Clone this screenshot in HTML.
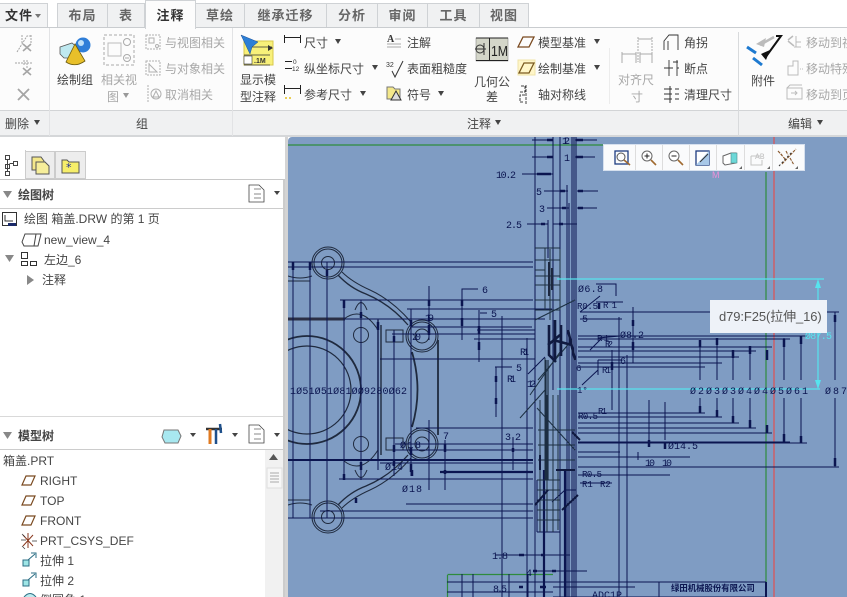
<!DOCTYPE html>
<html><head><meta charset="utf-8"><style>
html,body{margin:0;padding:0;background:#fff}
#p{position:relative;width:847px;height:597px;overflow:hidden;background:#fff;font-family:"Liberation Sans","Noto Sans CJK SC",sans-serif;color:#444}
.a{position:absolute}
.t{position:absolute;white-space:nowrap;font-size:12px;line-height:14px;color:#444}
.d{color:#a8a8a8}
.b{font-weight:bold}
.tab{position:absolute;top:3px;height:24px;box-sizing:border-box;background:#f0f1f2;border:1px solid #cfd2d5;border-left:0;border-bottom:0;font-size:13px;line-height:23px;text-align:center;color:#666;font-weight:bold;letter-spacing:1px}
.tri{position:absolute;width:0;height:0;border-left:3.5px solid transparent;border-right:3.5px solid transparent;border-top:5px solid #444}
svg{position:absolute;overflow:visible}
</style></head><body><div id="p">

<!-- ribbon -->
<div class="a" style="left:0;top:0;width:847px;height:27px;background:#fff"></div>
<div class="a" style="left:0;top:27px;width:847px;height:84px;background:#fcfcfc;border-top:1px solid #c9cccf;box-sizing:border-box"></div>
<div class="a" style="left:0;top:110px;width:847px;height:26px;background:#f0f1f2;border-top:1px solid #d2d4d6;box-sizing:border-box"></div>
<div class="a" style="left:0;top:135px;width:847px;height:2px;background:#d5d7d9"></div>
<div class="a" style="left:49px;top:28px;width:1px;height:108px;background:#e2e3e5"></div>
<div class="a" style="left:232px;top:28px;width:1px;height:108px;background:#e2e3e5"></div>
<div class="a" style="left:738px;top:32px;width:1px;height:104px;background:#d8dadc"></div>
<div class="a" style="left:609px;top:48px;width:1px;height:56px;background:#ececec"></div>

<div class="tab" style="left:0;width:48px;background:#f3f4f5;border-left:0;color:#333;text-align:left;padding-left:5px">文件</div>
<div class="tri" style="left:35px;top:14px;border-top-color:#777;border-top-width:4px"></div>
<div class="tab" style="left:57px;width:51px;border-left:1px solid #cfd2d5">布局</div>
<div class="tab" style="left:108px;width:37px">表</div>
<div class="tab" style="left:145px;top:0;height:29px;width:51px;background:#fcfcfc;color:#333;line-height:30px;border-left:1px solid #cfd2d5">注释</div>
<div class="tab" style="left:196px;width:49px">草绘</div>
<div class="tab" style="left:245px;width:82px">继承迁移</div>
<div class="tab" style="left:327px;width:51px">分析</div>
<div class="tab" style="left:378px;width:50px">审阅</div>
<div class="tab" style="left:428px;width:52px">工具</div>
<div class="tab" style="left:480px;width:49px">视图</div>

<!-- ribbon texts -->
<div class="t" style="left:57px;top:73px">绘制组</div>
<div class="t d" style="left:101px;top:73px">相关视</div>
<div class="t d" style="left:107px;top:90px">图</div><div class="tri" style="left:123px;top:93px;border-top-color:#999"></div>
<div class="t d" style="left:165px;top:36px">与视图相关</div>
<div class="t d" style="left:165px;top:62px">与对象相关</div>
<div class="t d" style="left:165px;top:88px">取消相关</div>
<div class="t" style="left:240px;top:73px">显示模</div>
<div class="t" style="left:240px;top:90px">型注释</div>
<div class="t" style="left:5px;top:117px">删除</div><div class="tri" style="left:34px;top:120px"></div>
<div class="t" style="left:136px;top:117px">组</div>
<div class="t" style="left:467px;top:117px">注释</div><div class="tri" style="left:495px;top:120px"></div>
<div class="t" style="left:788px;top:117px">编辑</div><div class="tri" style="left:817px;top:120px"></div>

<div class="t" style="left:304px;top:36px">尺寸</div><div class="tri" style="left:335px;top:39px"></div>
<div class="t" style="left:304px;top:62px">纵坐标尺寸</div><div class="tri" style="left:372px;top:65px"></div>
<div class="t" style="left:304px;top:88px">参考尺寸</div><div class="tri" style="left:360px;top:91px"></div>
<div class="t" style="left:407px;top:36px">注解</div>
<div class="t" style="left:407px;top:62px">表面粗糙度</div>
<div class="t" style="left:407px;top:88px">符号</div><div class="tri" style="left:438px;top:91px"></div>
<div class="t" style="left:474px;top:75px">几何公</div>
<div class="t" style="left:486px;top:90px">差</div>
<div class="t" style="left:538px;top:36px">模型基准</div><div class="tri" style="left:594px;top:39px"></div>
<div class="t" style="left:538px;top:62px">绘制基准</div><div class="tri" style="left:594px;top:65px"></div>
<div class="t" style="left:538px;top:88px">轴对称线</div>
<div class="t d" style="left:618px;top:73px">对齐尺</div>
<div class="t d" style="left:631px;top:90px">寸</div>
<div class="t" style="left:684px;top:36px">角拐</div>
<div class="t" style="left:684px;top:62px">断点</div>
<div class="t" style="left:684px;top:88px">清理尺寸</div>
<div class="t" style="left:751px;top:74px">附件</div>
<div class="t d" style="left:806px;top:36px">移动到视图</div>
<div class="t d" style="left:806px;top:62px">移动特殊</div>
<div class="t d" style="left:806px;top:88px">移动到页面</div>

<!-- ribbon icons -->
<svg width="847" height="137" viewBox="0 0 847 137" style="left:0;top:0" fill="none">
<g stroke="#a5a5a5" stroke-width="1">
<path d="M22 35V44M31 35V44M17 52L27 36H31" stroke-dasharray="2 1"/><path d="M23 44L31 51M31 44L23 51" stroke-width="1.6"/>
<path d="M15 63H33M24 60V66M27 60V68" stroke-dasharray="2 1"/><path d="M23 68L31 75M31 68L23 75" stroke-width="1.6"/>
<path d="M18 89L29 100M29 89L18 100" stroke-width="1.8"/>
</g>
<!-- 绘制组 -->
<path d="M60 47L72 43L78 48V58L64 58L60 54Z" fill="#bfe9f0" stroke="#555" stroke-width=".8"/>
<circle cx="83" cy="45" r="7.5" fill="#2f7ed8"/><circle cx="81" cy="43" r="3" fill="#bfe0f8"/>
<path d="M75 44L66 62Q75 68 85 61Z" fill="#e8c02a" stroke="#6a5a10" stroke-width=".8"/>
<!-- 相关视图 -->
<rect x="104" y="35" width="30" height="30" stroke="#aaa" stroke-dasharray="3 2"/>
<rect x="108" y="43" width="13" height="13" stroke="#bbb"/>
<circle cx="127" cy="42" r="3.5" stroke="#aaa"/><circle cx="127" cy="58" r="3.5" stroke="#aaa"/><path d="M125 58H129" stroke="#aaa"/>
<!-- small gray -->
<g stroke="#b0b0b0">
<rect x="146" y="35" width="14" height="14" stroke-dasharray="2 1"/><rect x="149" y="38" width="5" height="5"/><circle cx="157" cy="46" r="1.5"/>
<rect x="146" y="61" width="14" height="14" stroke-dasharray="2 1"/><path d="M149 63V72H157L149 64"/>
<path d="M148 85V102" stroke-dasharray="2 1"/><circle cx="156" cy="94" r="5"/><path d="M153 97L156 91L159 97Z"/>
</g>
<!-- 显示模型注释 -->
<rect x="244" y="41" width="29" height="24" fill="#f8f07a" stroke="#d7c94a"/>
<path d="M241 35L258 42L252 47L250 54Z" fill="#2c7fd6" stroke="#1b4f96" stroke-width=".5"/>
<path d="M252 47H272M244 55H270M244 65H270" stroke="#333" stroke-width=".8"/>
<path d="M268 45L273 48L268 51Z" fill="#333"/>
<rect x="244" y="56" width="8" height="8" fill="#fff" stroke="#333" stroke-width=".6"/>
<text x="254" y="63" font-family="Liberation Sans" font-size="7" font-weight="bold" fill="#333">.1M</text>
<!-- dim icons -->
<g stroke="#222" stroke-width="1">
<path d="M284.500 35V43M300.500 35V43M285 37.500H300"/>
<path d="M285 61.500H292M285 68.500H292"/>
<path d="M284.500 85V94M300.500 85V94M285 88.500H300"/>
</g>
<text x="293" y="64" font-family="Liberation Sans" font-size="6.5" fill="#333">0</text>
<text x="292" y="71" font-family="Liberation Sans" font-size="6.5" fill="#333">12</text>
<path d="M285 98H287M289 98H291" stroke="#e4c020" stroke-width="1.6"/>
<!-- 注解 etc -->
<text x="387" y="42" font-family="Liberation Serif" font-size="10" font-weight="bold" fill="#333">A</text>
<path d="M395 39H401M387 44H401M387 47H401" stroke="#aaa"/>
<text x="386" y="67" font-family="Liberation Sans" font-size="7" fill="#333">32</text>
<path d="M392 71L395 77L403 61" stroke="#333" stroke-width="1"/>
<path d="M387 87H393L395 89H400V99H387Z" fill="#f4e88a" stroke="#777"/><path d="M391 100L396 91L401 100Z" fill="#ddd" stroke="#333"/>
<!-- 几何公差 -->
<rect x="476" y="38" width="32" height="23" fill="#d4d6c9" stroke="#777" stroke-width=".5"/>
<path d="M476 38H508M476 60.500H508M489.500 38V61" stroke="#222"/>
<circle cx="480" cy="49" r="4" stroke="#333"/><path d="M475 49H486M484 43V55" stroke="#333"/>
<text x="491" y="56" font-family="Liberation Sans" font-size="15" fill="#222" textLength="17" lengthAdjust="spacingAndGlyphs">1M</text>
<!-- datum -->
<path d="M523 37H534L529 47H518Z" stroke="#7a4a20" stroke-width="1.3"/>
<rect x="518" y="60" width="17" height="15" fill="#fff6c8" stroke="#efe3a8"/>
<path d="M524 63H534L529 73H519Z" stroke="#7a5a20" stroke-width="1.3"/>
<path d="M521 86H525V92H520M525 95H520V102H524M526 85V104" stroke="#444" stroke-dasharray="3 1"/>
<!-- 对齐尺寸 -->
<g stroke="#aaa">
<path d="M638 37V62" stroke-dasharray="2 1"/><path d="M652 37V62" stroke-dasharray="2 1"/><path d="M638 39H652"/>
<path d="M622 52V63M636 52V63M640 52V63M652 52V63M622 54H636M640 54H652"/>
</g>
<g stroke="#333">
<path d="M664 50V41L669 35H678V50M668 50V41" stroke-width=".9"/>
<path d="M664 68H673M669 60V76M677 60V76M677 68H679M673 62H678" stroke-width=".9"/>
<path d="M664 89H672M664 94H672M664 99H672M670 86L670 103M675 89H679M675 94H679M675 99H679" stroke-width="1"/>
</g>
<!-- 附件 -->
<path d="M776 36H781L765 58" stroke="#111" stroke-width="2"/><path d="M761 54L770 50L766 60Z" fill="#111"/>
<path d="M774 37L760 45" stroke="#bbb" stroke-width="2.5"/><path d="M756 44L766 38L764 47Z" fill="#bbb"/>
<path d="M747 47L756 53M753 58L762 65" stroke="#1e7ad0" stroke-width="3"/>
<g stroke="#bbb">
<path d="M788 40L793 36M788 41L794 46" stroke-width="1.5"/><path d="M796 36V47M796 42H801M794 47H801"/>
<path d="M788 75V66H793V61H798V75Z"/><path d="M800 69H803" stroke-dasharray="1 1"/>
<rect x="787" y="88" width="15" height="11"/><path d="M787 88L790 85H802M791 93H797M795 91L797 93L795 95"/>
</g>
</svg>

<!-- left panel -->
<div class="a" style="left:0;top:137px;width:285px;height:460px;background:#fff"></div>
<div class="a" style="left:285px;top:137px;width:3px;height:460px;background:#d4d4d4"></div>
<div class="a" style="left:25px;top:151px;width:30px;height:28px;background:#ededed;border:1px solid #ccc;box-sizing:border-box"></div>
<div class="a" style="left:55px;top:151px;width:31px;height:28px;background:#ededed;border:1px solid #ccc;box-sizing:border-box"></div>
<div class="a" style="left:0;top:179px;width:285px;height:1px;background:#c8c8c8"></div>
<div class="a" style="left:25px;top:150px;width:0;height:30px;border-left:1px solid #ccc"></div>
<div class="a" style="left:0;top:208px;width:285px;height:1px;background:#ccc"></div>
<div class="a" style="left:0;top:416px;width:285px;height:1px;background:#d9d9d9"></div>
<div class="a" style="left:0;top:449px;width:285px;height:1px;background:#ccc"></div>
<div class="a" style="left:283px;top:180px;width:2px;height:417px;background:#ccc"></div>

<svg width="285" height="460" viewBox="0 137 285 460" style="left:0;top:137px" fill="none">
<!-- tab icons -->
<g stroke="#444"><rect x="5.500" y="155.500" width="4" height="4"/><rect x="5.500" y="164.500" width="4" height="4"/><rect x="13.500" y="161.500" width="4" height="4"/><rect x="5.500" y="171.500" width="4" height="4"/><path d="M7.500 160V172M9.500 163.500H13.500"/></g>
<path d="M32 157H41L44 161V170H32Z" fill="#f4e88a" stroke="#555"/><path d="M36 162H45L49 166V174H36Z" fill="#f6ee9a" stroke="#555"/>
<path d="M62 160H67L69 162H79V173H62Z" fill="#f6ee6a" stroke="#555"/>
<text x="66" y="171" font-size="11" font-family="DejaVu Sans" fill="#1a2a9a">*</text>
<!-- header tris -->
<path d="M3 191L12 191L7.500 198Z" fill="#888"/>
<path d="M3 432L12 432L7.500 439Z" fill="#888"/>
<g stroke="#444" fill="#fff"><path d="M249 185H259L264 190V202H249Z" stroke-width=".8"/><path d="M254 189H261M254 194H261M254 198H261" stroke="#888"/></g>
<path d="M274 191H280L277 195Z" fill="#444"/>
<path d="M249 425H259L264 430V443H249Z" fill="#fff" stroke="#444" stroke-width=".8"/><path d="M254 429H261M254 434H261M254 439H261" stroke="#888"/>
<path d="M274 433H280L277 437Z" fill="#444"/>
<path d="M190 433H196L193 437Z" fill="#444"/><path d="M232 433H238L235 437Z" fill="#444"/>
<path d="M164 430H178L181 436L178 443H165L162 437Z" fill="#a8e8f0" stroke="#777"/>
<path d="M206 429H222" stroke="#333" stroke-width="2.500"/><path d="M210 429V444" stroke="#e07a20" stroke-width="3"/><path d="M216 429V444M220 424L221 433" stroke="#1e4f8a" stroke-width="2.500"/>
<!-- tree icons -->
<rect x="2.500" y="212.500" width="14" height="13" stroke="#333"/><path d="M5 215V221H13" stroke="#333"/><rect x="8" y="223" width="8" height="3" fill="#1a2a6a"/>
<path d="M22 242L25 234H41L38 246H24Z M36 234L34 246" stroke="#444" fill="#fff"/>
<path d="M5 255H14L9.500 262Z" fill="#888"/>
<rect x="21.500" y="252.500" width="6" height="6" stroke="#333"/><rect x="21.500" y="261.500" width="6" height="4" stroke="#333"/><rect x="30.500" y="261.500" width="6" height="4" stroke="#333"/>
<path d="M27 275L34 280L27 285Z" fill="#888"/>
<g stroke="#7a4a20" stroke-width="1.200">
<path d="M26 476H35L31 485H22Z"/><path d="M26 496H35L31 505H22Z"/><path d="M26 516H35L31 525H22Z"/>
</g>
<path d="M23 535L33 546M33 535L23 546M28 533V548" stroke="#8a3a20"/><path d="M21 540H26M32 541H37M22 534L25 537M22 546L25 549" stroke="#333" stroke-width=".7"/>
<rect x="23" y="560" width="6" height="6" fill="#9fe6e6" stroke="#2c6f85"/><path d="M28 560L35 554M31 553H36V558" stroke="#2c6f85"/>
<rect x="23" y="580" width="6" height="6" fill="#9fe6e6" stroke="#2c6f85"/><path d="M28 580L35 574M31 573H36V578" stroke="#2c6f85"/>
<path d="M24 597Q30 590 36 597" fill="#bdebef" stroke="#2c6f85"/>
<!-- scrollbar -->
<rect x="265" y="450" width="18" height="147" fill="#f1f1f1"/>
<path d="M269 460H278L273.500 454Z" fill="#555"/>
<rect x="267" y="468" width="15" height="20" fill="#f7f7f7" stroke="#ddd"/>
<path d="M270 473H279M270 476H279M270 479H279M270 482H279" stroke="#aaa"/>
</svg>

<div class="t b" style="left:18px;top:188px;font-size:12px;color:#444">绘图树</div>
<div class="t" style="left:24px;top:212px">绘图 箱盖.DRW 的第 1 页</div>
<div class="t" style="left:44px;top:233px">new_view_4</div>
<div class="t" style="left:44px;top:253px">左边_6</div>
<div class="t" style="left:42px;top:273px">注释</div>
<div class="t b" style="left:18px;top:429px;color:#444">模型树</div>
<div class="t" style="left:3px;top:454px">箱盖.PRT</div>
<div class="t" style="left:40px;top:474px">RIGHT</div>
<div class="t" style="left:40px;top:494px">TOP</div>
<div class="t" style="left:40px;top:514px">FRONT</div>
<div class="t" style="left:40px;top:534px">PRT_CSYS_DEF</div>
<div class="t" style="left:40px;top:554px">拉伸 1</div>
<div class="t" style="left:40px;top:574px">拉伸 2</div>
<div class="t" style="left:40px;top:593px">倒圆角 1</div>

<!-- canvas -->
<div class="a" style="left:288px;top:137px;width:559px;height:460px;background:#7f9cc3;overflow:hidden;border-top-left-radius:4px">
<svg width="847" height="597" viewBox="0 0 847 597" style="left:-288px;top:-137px" fill="none">
<path d="M288 145H766" stroke="#2f8b3c" stroke-width="1.200"/>
<path d="M766 172V582" stroke="#2f8b3c" stroke-width="1.200"/>
<path d="M774 137V597" stroke="#d25a60" stroke-width="1.400"/>
<path d="M447.500 575V597M447.500 574.500H553" stroke="#2f8b3c" stroke-width="1.200"/>

<!-- geometry left view -->
<g stroke="#1f2a3e" stroke-width="1">
<circle cx="328" cy="263" r="16"/><circle cx="328" cy="263" r="14"/><circle cx="328" cy="263" r="6.500"/>
<circle cx="422" cy="336" r="16"/><circle cx="422" cy="336" r="14"/><circle cx="422" cy="336" r="7"/>
<circle cx="422" cy="444" r="16"/><circle cx="422" cy="444" r="14"/><circle cx="422" cy="444" r="7"/>
<circle cx="328" cy="517" r="16"/><circle cx="328" cy="517" r="14"/><circle cx="328" cy="517" r="6.500"/>
<circle cx="307" cy="390" r="54" stroke-width="1.800"/><circle cx="307" cy="390" r="44" stroke-width="1.200"/>
<circle cx="361" cy="335" r="7.500"/><circle cx="361" cy="444" r="7.500"/>
<path d="M338 275Q350 288 366 294Q390 304 408 325" stroke-width="1.300"/>
<path d="M342 272Q352 282 370 290Q392 300 411 322"/>
<path d="M338 505Q350 492 366 486Q390 476 408 455" stroke-width="1.300"/>
<path d="M342 508Q352 498 370 490Q392 480 411 458"/>
<path d="M344 319Q362 305 378 330V450Q362 475 344 461" stroke-width="1"/>
<path d="M378 320V460M381 325V455" stroke-width="1.400"/>
<path d="M355 310Q361 295 367 310M355 470Q361 485 367 470"/>
<path d="M386 330H403V342H386ZM386 438H403V450H386Z"/>
<path d="M412 352Q423 390 412 427" stroke-width="1.800"/>
<path d="M438 340V435" stroke-width="1.800"/>
<path d="M288 276Q300 280 312 276M288 281H310M288 500H310M288 505Q300 501 312 505"/>
</g>
<path d="M288 319H345" stroke="#2b2f45" stroke-width="3"/>

<!-- dim lines left -->
<g stroke="#0b1550" stroke-width="1">
<path d="M288 262H533M288 267H533M340 300H533M407 309H552M345 319H545M410 327H532M477 330H535M392 334H535M474 339H535M380 359H535M416 428H533M395 444H533M395 450H533M380 463H533M339 479H533M406 504H533M320 511H533M288 518H533"/>
<path d="M293 262V518M310 262V518M327 262V518M344 300V480M361 300V480M378 319V470M394 330V476M411 309V476M429 286V340M429 420V490M445 440V490M462 289V340M479 310V362M496 367V417M502 316V597M513 437V470M527 338V597M535 137V597M553 137V390M560 137V597M567 185V597M569 203V597M572 137V597M574 137V597M576 137V597M548 220V258"/>
<path d="M462 300V289H478M480 313H487M495 367H512"/>
<path d="M532 140H553M575 140H597M532 157H553M575 157H595M522 174H553M544 191H568M577 191H598M547 208H569M577 208H597M527 224H548M553 224H577"/>
<path d="M545 357L528 374"/>
</g>
<path d="M288 460H533" stroke="#0b1550" stroke-width="2"/>
<path d="M440 472H533" stroke="#0b1550" stroke-width="2.200"/>
<path d="M544 470V597M565 470V597" stroke="#0b1550" stroke-width="2.200"/>

<!-- arrows -->
<g stroke="#0b1550" stroke-width="2.500">
<path d="M293 262V270M310 262V270M327 270V276M344 300V308M361 312V318M378 322V330M394 336V342M411 320V326M429 300V306M429 325V335M462 318V326M479 326V334M479 342V350M496 376V382M496 398V404M513 448V452M445 444V452M462 300V306M445 470V474M394 445V452M411 448V455M394 460V466M411 464V472M361 462V470M344 474V480M356 498V503M412 470V476"/>
<path d="M547 140H553M576 140H583M547 157H553M576 157H583M537 174H551M560 191H565M578 191H583M562 208H566M578 208H583M541 224H545M559 224H563"/>
<path d="M700 340V347M717 338V345M733 350V358M750 346V354M767 350V360M784 339V347M801 336V344M835 315V322M700 406V413M717 410V417M733 416V423M750 420V428M767 425V433M784 434V442M801 436V443M835 458V466M633 320V326M633 342V350M649 440V447M665 442V449M599 303V309M612 362V370"/>
<path d="M519 555H524M541 555H545M533 571H537M552 571H556M519 587H523M540 587H546"/>
</g>

<!-- right dim -->
<g stroke="#0b1550" stroke-width="1">
<path d="M580 312H839M580 319H622M578 336H807M578 339H790M578 347H772M578 351H756M578 357H739M578 363H722M578 367H705"/>
<path d="M578 413H705M578 417H722M578 423H739M578 428H756M578 433H772M578 442H790M578 443H807M578 452H620M578 467H839M578 457H690M578 475H670M580 483H612"/>
<path d="M700 340V380M717 338V380M733 350V380M750 346V380M784 338V380M801 336V380M835 312V380M700 398V413M717 398V417M733 398V423M750 398V428M784 398V442M801 398V443M835 398V467"/>
<path d="M619 317V597M627 355V597M633 307V363M649 400V440M665 402V440M612 350V410M638 452V460"/>
<path d="M596 284H616V296M596 302H623M580 312L600 296M598 338L620 336M590 350L602 338M598 360H622M598 360V375M598 370L582 385"/>
<path d="M535 571H587M535 555H570M495 555H535M635 587H553M553 597H766"/>
<path d="M553 582H766M659 582V597M462 574V597M473 574V597M509 574V597M528 574V597M447 582H553M447 592H553"/>
<path d="M537 532H560M537 480V532"/>
<path d="M565 490L552 502M565 490H576"/>
</g>
<path d="M766 582V597" stroke="#0b1550" stroke-width="2"/>

<!-- dense core -->
<g stroke="#1c2f42" stroke-width="1">
<path d="M535 248H560M535 260H560M535 276H560M535 285H560M535 300H560M535 310H560M545 248V310M550 249V320M560 249V310M535 270H545"/>
<path d="M537 480H560M537 490H560M537 500H560M537 510H560M537 520H560M540 400V532M547 395V532M553 395V532M558 395V530M537 408L575 450M538 430H575M538 445H575M538 460H575"/>
<path d="M535 320L575 300M538 380L572 340M530 395L560 352M520 418L545 390M545 358V480"/>
</g>
<path d="M549 262V296M552 268V290" stroke="#1d2840" stroke-width="2"/>
<path d="M549 325V355L556 362M555 320V360M561 325V356M553 340L572 345M548 345L560 335M568 330L575 360" stroke="#101a40" stroke-width="2.600"/>
<path d="M546 360V480M548 360V480" stroke="#1c2f42" stroke-width="1.200"/>
<path d="M540 455V470M572 432L580 440M556 470H575" stroke="#101a40" stroke-width="2"/>
<path d="M535 505L548 490M562 510L578 495" stroke="#0e1840" stroke-width="2"/>

<!-- cyan -->
<path d="M557 279H824M557 389H820M818 281V388" stroke="#56e4ee" stroke-width="1.200"/>
<path d="M818 279L815 288H821ZM818 389L815 380H821Z" fill="#56e4ee"/>

<!-- labels -->
<g font-family="Liberation Mono,monospace" font-size="10" fill="#0b1550">
<text x="496" y="178" textLength="20">10.2</text><text x="506" y="228" textLength="16">2.5</text>
<text x="536" y="195">5</text><text x="539" y="212">3</text>
<text x="562" y="144" textLength="8">12</text><text x="564" y="161">1</text>
<text x="482" y="293">6</text><text x="491" y="317">5</text><text x="516" y="371">5</text>
<text x="507" y="382" textLength="9">R1</text>
<text x="520" y="355" textLength="9">R1</text>
<text x="527" y="387" textLength="9">12</text>
<text x="425" y="321" textLength="9">19</text><text x="412" y="340" textLength="9">20</text>
<text x="290" y="394" textLength="117">1Ø51Ø51Ø81ØØ9280Ø62</text>
<text x="443" y="439">7</text><text x="505" y="440" textLength="16">3.2</text>
<text x="400" y="448" textLength="21">Ø18</text>
<text x="385" y="470" textLength="18">Ø14</text>
<text x="402" y="492" textLength="20">Ø18</text>
<text x="492" y="559" textLength="16">1.8</text><text x="526" y="576">4</text><text x="493" y="592" textLength="14">8.5</text>
<text x="578" y="292" textLength="25">Ø6.8</text>
<text x="577" y="309" textLength="21" font-size="9">R0.5</text>
<text x="603" y="308" textLength="14" font-size="9">R1</text>
<text x="582" y="322">5</text>
<text x="597" y="341" textLength="12" font-size="9">R1</text>
<text x="605" y="347" textLength="8" font-size="9">R2</text>
<text x="620" y="338" textLength="24">Ø8.2</text>
<text x="620" y="364">6</text>
<text x="602" y="373" textLength="9" font-size="9">R1</text>
<text x="576" y="371" font-size="9">6</text>
<text x="577" y="393" font-size="9">1°</text>
<text x="578" y="419" textLength="20" font-size="9">R0.5</text>
<text x="598" y="414" textLength="9" font-size="9">R1</text>
<text x="668" y="449" textLength="30">Ø14.5</text>
<text x="645" y="466" textLength="10">10</text><text x="662" y="466" textLength="10">10</text>
<text x="582" y="477" textLength="20" font-size="9">R0.5</text>
<text x="582" y="487" font-size="9">R1</text><text x="600" y="487" font-size="9">R2</text>
<text x="690" y="394" textLength="118">Ø2Ø3Ø3Ø4Ø4Ø5Ø61</text>
<text x="825" y="394" textLength="22">Ø87</text>
<text x="592" y="598" textLength="30">ADC1P</text>
</g>
<text x="805" y="339" font-family="Liberation Mono,monospace" font-size="10" fill="#56e4ee" textLength="27">Ø87.5</text>
<text x="671" y="591" font-family="Liberation Sans,Noto Sans CJK SC,sans-serif" font-size="8.400" fill="#0b1550" font-weight="bold">绿田机械股份有限公司</text>
<text x="712" y="178" font-family="Liberation Sans" font-size="9" fill="#ee8fd8">M</text>
</svg>
</div>

<!-- floating toolbar -->
<div class="a" style="left:603px;top:144px;width:202px;height:27px;background:#fafbfc;border:1px solid #d6e0ee;box-sizing:border-box"></div>
<svg width="847" height="597" viewBox="0 0 847 597" style="left:0;top:0" fill="none">
<path d="M635.500 145V170M662.500 145V170M689.500 145V170M716.500 145V170M744.500 145V170M772.500 145V170" stroke="#ddd"/>
<rect x="615" y="151" width="13" height="13" stroke="#1d3c80" stroke-width="1.300"/><circle cx="621" cy="157" r="4" stroke="#555"/><path d="M624 160L630 165" stroke="#a06a30" stroke-width="1.600"/>
<circle cx="647" cy="156" r="5" stroke="#666" fill="#fff"/><path d="M644.500 156H649.500M647 153.500V158.500" stroke="#222"/><path d="M651 160L656 165" stroke="#a06a30" stroke-width="1.600"/>
<circle cx="674" cy="156" r="5" stroke="#666" fill="#fff"/><path d="M671.500 156H676.500" stroke="#222"/><path d="M678 160L683 165" stroke="#a06a30" stroke-width="1.600"/>
<rect x="696" y="151" width="13" height="14" fill="#fff" stroke="#1d3c80" stroke-width="1.300"/><path d="M696 165L709 151V165Z" fill="#a8c8e8"/><path d="M700 162L708 154" stroke="#333"/>
<path d="M723 156L731 153H736V163L725 165L723 163Z" fill="#fff" stroke="#666"/><path d="M731 153H737V163H731Z" fill="#6cd8d8" stroke="#4a8a8a" stroke-width=".6"/>
<path d="M751 156H760M751 156V165H762V160" stroke="#c4c4c4"/><text x="755" y="159" font-family="Liberation Mono" font-size="8" fill="#c0c0c0">AB</text>
<path d="M778 151L786 160M782 164L796 149M790 158L794 165M778 151L782 155M786 151L788 155" stroke="#8a5a30" stroke-width="1.100" stroke-dasharray="3 1"/><path d="M779 166L792 152" stroke="#333" stroke-dasharray="2 2"/>
<path d="M739 169L742 166V169ZM767 169L770 166V169ZM795 169L798 166V169Z" fill="#666"/>
</svg>

<!-- tooltip -->
<div class="a" style="left:710px;top:300px;width:117px;height:33px;background:#eef2f8;box-sizing:border-box;font-size:13px;line-height:33px;padding-left:9px;color:#555;white-space:nowrap;letter-spacing:-.1px">d79:F25(拉伸_16)</div>

</div></body></html>
